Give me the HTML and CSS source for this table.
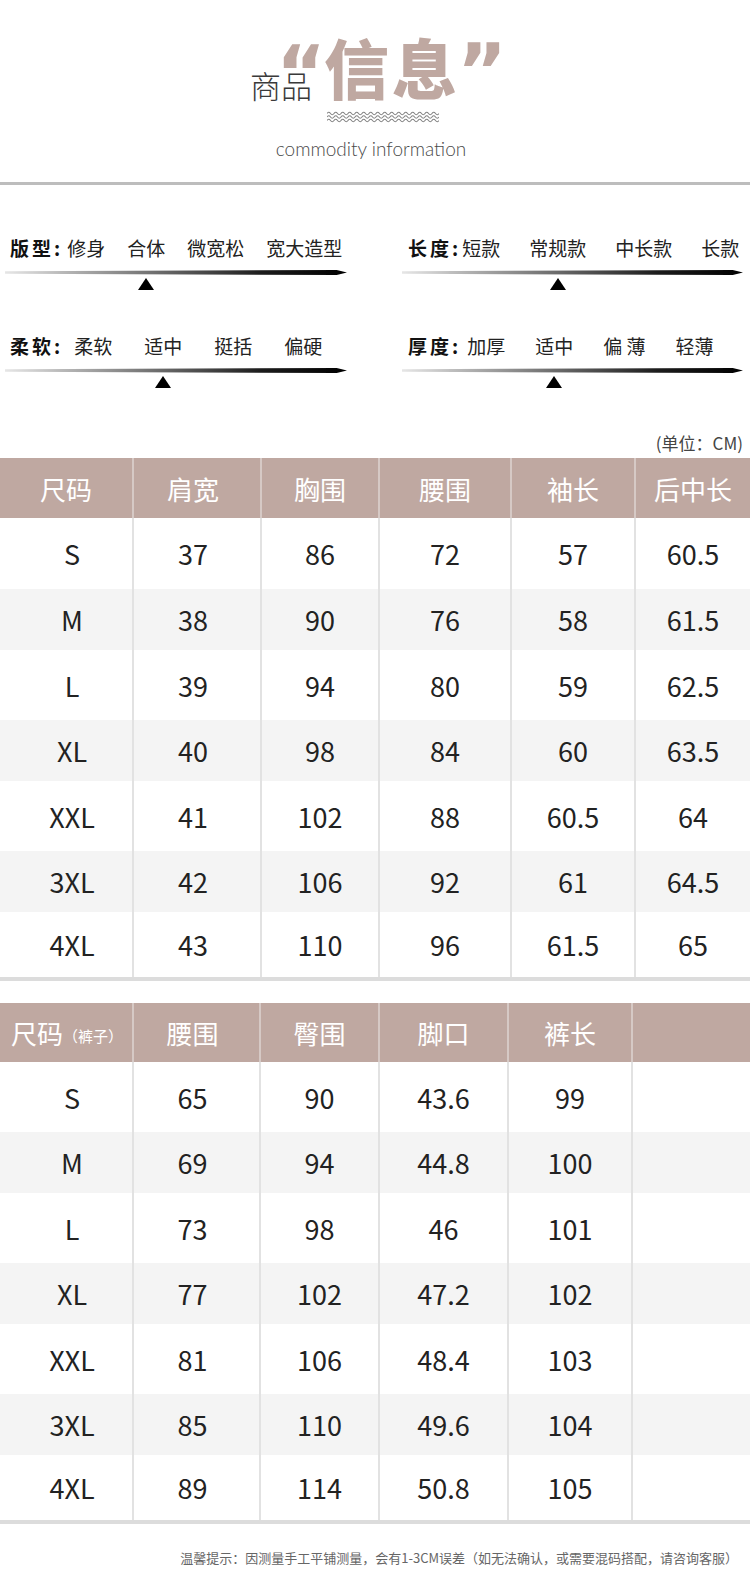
FILE: index.html
```html
<!DOCTYPE html>
<html lang="zh-CN">
<head>
<meta charset="utf-8">
<title>商品信息</title>
<link rel="stylesheet" href="styles.css">
</head>
<body>
<div class="page">
  <header class="brand">
    <div class="brand__title">
      <span class="brand__sub">商品</span>
      <span class="brand__quote brand__quote--open">“</span>
      <span class="brand__main"><span>信</span><span>息</span></span>
      <span class="brand__quote brand__quote--close">”</span>
    </div>
    <svg class="brand__wave" width="112" height="12" viewBox="0 0 112 12">
      <defs>
        <path id="wv" d="M0 0 q1.75 -2.4 3.5 0 t3.5 0 t3.5 0 t3.5 0 t3.5 0 t3.5 0 t3.5 0 t3.5 0 t3.5 0 t3.5 0 t3.5 0 t3.5 0 t3.5 0 t3.5 0 t3.5 0 t3.5 0 t3.5 0 t3.5 0 t3.5 0 t3.5 0 t3.5 0 t3.5 0 t3.5 0 t3.5 0 t3.5 0 t3.5 0 t3.5 0 t3.5 0 t3.5 0 t3.5 0 t3.5 0 t3.5 0"/>
      </defs>
      <g fill="none" stroke="#858585" stroke-width="1.1">
        <use href="#wv" y="2.5"/>
        <use href="#wv" y="6"/>
        <use href="#wv" y="9.5"/>
      </g>
    </svg>
    <div class="brand__en">commodity information</div>
  </header>
  <div class="rule"></div>

  <section class="params">
    <div class="param">
      <div class="opts opts--fit">
        <span class="opts__label">版型:</span>
        <span class="opt">修身</span>
        <span class="opt opt--sel">合体</span>
        <span class="opt">微宽松</span>
        <span class="opt">宽大造型</span>
      </div>
      <div class="bar"></div>
    </div>
    <div class="param param--right">
      <div class="opts opts--len">
        <span class="opts__label">长度:</span>
        <span class="opt">短款</span>
        <span class="opt opt--sel">常规款</span>
        <span class="opt">中长款</span>
        <span class="opt">长款</span>
      </div>
      <div class="bar"></div>
    </div>
    <div class="param">
      <div class="opts opts--soft">
        <span class="opts__label">柔软:</span>
        <span class="opt">柔软</span>
        <span class="opt opt--sel">适中</span>
        <span class="opt">挺括</span>
        <span class="opt">偏硬</span>
      </div>
      <div class="bar"></div>
    </div>
    <div class="param param--right">
      <div class="opts opts--thick">
        <span class="opts__label">厚度:</span>
        <span class="opt">加厚</span>
        <span class="opt opt--sel">适中</span>
        <span class="opt">偏 薄</span>
        <span class="opt">轻薄</span>
      </div>
      <div class="bar"></div>
    </div>
  </section>

  <div class="unit">(单位：CM)</div>

  <div class="st st--top">
    <div class="st__row st__row--head">
      <div class="st__cell">尺码</div>
      <div class="st__cell">肩宽</div>
      <div class="st__cell">胸围</div>
      <div class="st__cell">腰围</div>
      <div class="st__cell">袖长</div>
      <div class="st__cell">后中长</div>
    </div>
    <div class="st__body">
      <div class="st__row"><div class="st__cell st__cell--size">S</div><div class="st__cell">37</div><div class="st__cell">86</div><div class="st__cell">72</div><div class="st__cell">57</div><div class="st__cell">60.5</div></div>
      <div class="st__row"><div class="st__cell st__cell--size">M</div><div class="st__cell">38</div><div class="st__cell">90</div><div class="st__cell">76</div><div class="st__cell">58</div><div class="st__cell">61.5</div></div>
      <div class="st__row"><div class="st__cell st__cell--size">L</div><div class="st__cell">39</div><div class="st__cell">94</div><div class="st__cell">80</div><div class="st__cell">59</div><div class="st__cell">62.5</div></div>
      <div class="st__row"><div class="st__cell st__cell--size">XL</div><div class="st__cell">40</div><div class="st__cell">98</div><div class="st__cell">84</div><div class="st__cell">60</div><div class="st__cell">63.5</div></div>
      <div class="st__row"><div class="st__cell st__cell--size">XXL</div><div class="st__cell">41</div><div class="st__cell">102</div><div class="st__cell">88</div><div class="st__cell">60.5</div><div class="st__cell">64</div></div>
      <div class="st__row"><div class="st__cell st__cell--size">3XL</div><div class="st__cell">42</div><div class="st__cell">106</div><div class="st__cell">92</div><div class="st__cell">61</div><div class="st__cell">64.5</div></div>
      <div class="st__row"><div class="st__cell st__cell--size">4XL</div><div class="st__cell">43</div><div class="st__cell">110</div><div class="st__cell">96</div><div class="st__cell">61.5</div><div class="st__cell">65</div></div>
    </div>
  </div>

  <div class="st st--pants">
    <div class="st__row st__row--head">
      <div class="st__cell st__cell--first">尺码<span class="st__note">（裤子）</span></div>
      <div class="st__cell">腰围</div>
      <div class="st__cell">臀围</div>
      <div class="st__cell">脚口</div>
      <div class="st__cell">裤长</div>
      <div class="st__cell"></div>
    </div>
    <div class="st__body">
      <div class="st__row"><div class="st__cell st__cell--size">S</div><div class="st__cell">65</div><div class="st__cell">90</div><div class="st__cell">43.6</div><div class="st__cell">99</div><div class="st__cell"></div></div>
      <div class="st__row"><div class="st__cell st__cell--size">M</div><div class="st__cell">69</div><div class="st__cell">94</div><div class="st__cell">44.8</div><div class="st__cell">100</div><div class="st__cell"></div></div>
      <div class="st__row"><div class="st__cell st__cell--size">L</div><div class="st__cell">73</div><div class="st__cell">98</div><div class="st__cell">46</div><div class="st__cell">101</div><div class="st__cell"></div></div>
      <div class="st__row"><div class="st__cell st__cell--size">XL</div><div class="st__cell">77</div><div class="st__cell">102</div><div class="st__cell">47.2</div><div class="st__cell">102</div><div class="st__cell"></div></div>
      <div class="st__row"><div class="st__cell st__cell--size">XXL</div><div class="st__cell">81</div><div class="st__cell">106</div><div class="st__cell">48.4</div><div class="st__cell">103</div><div class="st__cell"></div></div>
      <div class="st__row"><div class="st__cell st__cell--size">3XL</div><div class="st__cell">85</div><div class="st__cell">110</div><div class="st__cell">49.6</div><div class="st__cell">104</div><div class="st__cell"></div></div>
      <div class="st__row"><div class="st__cell st__cell--size">4XL</div><div class="st__cell">89</div><div class="st__cell">114</div><div class="st__cell">50.8</div><div class="st__cell">105</div><div class="st__cell"></div></div>
    </div>
  </div>

  <p class="tip">温馨提示：因测量手工平铺测量，会有1-3CM误差（如无法确认，或需要混码搭配，请咨询客服）</p>
</div>
</body>
</html>
```

FILE: styles.css
```css
* {
  box-sizing: border-box;
  margin: 0;
  padding: 0;
}

body {
  width: 750px;
  background: #ffffff;
  font-family: "Noto Sans CJK SC", "Noto Sans", sans-serif;
  color: #222222;
}

/* ---------- brand header ---------- */
.brand {
  height: 182px;
  padding-top: 28px;
}

.brand__title {
  display: flex;
  align-items: flex-start;
  padding-left: 250px;
}

.brand__sub {
  font-size: 31px;
  line-height: 1;
  font-weight: 300;
  color: #3a3a3a;
  margin-top: 41px;
}

.brand__quote {
  font-family: "DejaVu Sans", "Liberation Sans", sans-serif;
  font-weight: 700;
  font-size: 76px;
  line-height: 0.7;
  color: #bfa8a1;
}

.brand__quote--open {
  margin-left: -36px;
  margin-top: 19px;
}

.brand__main {
  display: flex;
  gap: 3px;
  font-size: 65px;
  line-height: 1;
  font-weight: 900;
  color: #bfa8a1;
  margin-left: -2px;
  margin-top: 6px;
}

.brand__quote--close {
  margin-left: 0;
  margin-top: 17px;
}

.brand__wave {
  display: block;
  margin: 11px 0 0 327px;
}

.brand__en {
  margin-top: 15px;
  padding-right: 8px;
  text-align: center;
  font-family: "Lato", "Noto Sans", sans-serif;
  font-weight: 300;
  font-size: 19px;
  line-height: 22px;
  color: #4a4a4a;
}

.rule {
  height: 3px;
  background: #bdbdbd;
}

/* ---------- parameters ---------- */
.params {
  display: grid;
  grid-template-columns: 342px 341px;
  column-gap: 55px;
  row-gap: 61px;
  padding: 53px 0 0 5px;
}

.opts {
  display: flex;
  font-size: 19px;
  line-height: 19px;
  white-space: nowrap;
  padding-left: 5px;
  color: #222222;
}

.param--right .opts {
  padding-left: 6px;
}

.opts__label {
  font-weight: 700;
  color: #111111;
  letter-spacing: 3px;
  margin-right: 4px;
}

.opt {
  position: relative;
}

.opt--sel::after {
  content: "";
  position: absolute;
  left: 50%;
  top: calc(100% + 21px);
  transform: translateX(-50%);
  border-left: 8px solid transparent;
  border-right: 8px solid transparent;
  border-bottom: 12px solid #000000;
}

.opts--fit { gap: 22px; }
.opts--fit .opts__label { margin-right: -18px; }

.opts--len { gap: 29px; }
.opts--len .opts__label { margin-right: -28px; }

.opts--soft { gap: 32px; }
.opts--soft .opts__label { margin-right: -21px; }

.opts--thick { gap: 30px; }
.opts--thick .opts__label { margin-right: -24px; }

.bar {
  margin-top: 13px;
  height: 5px;
  background: linear-gradient(90deg, #e6e6e6 0%, #aaaaaa 22%, #5e5e5e 50%, #1c1c1c 75%, #000000 100%);
  clip-path: polygon(0 25%, 97% 0, 100% 50%, 97% 100%, 0 75%);
}

/* ---------- unit label ---------- */
.unit {
  margin-top: 60px;
  padding-right: 7px;
  text-align: right;
  font-size: 17px;
  line-height: 20px;
  color: #444444;
}

/* ---------- size tables ---------- */
.st {
  margin-top: 5px;
  border-bottom: 4px solid #dcdcdc;
}

.st--pants {
  margin-top: 22px;
}

.st__row {
  display: grid;
  grid-template-columns: 132px 128px 118px 132px 124px 116px;
  height: 70px;
}

.st--pants .st__row {
  grid-template-columns: 132px 127px 119px 129px 124px 119px;
}

.st__row--head {
  height: 60px;
  background: #bfa8a1;
  color: #ffffff;
  font-size: 26px;
}

.st--pants .st__row--head {
  height: 59px;
}

.st__body .st__row:nth-child(even) {
  height: 61px;
  background: #f4f4f4;
}

.st__body .st__row:first-child {
  height: 71px;
}

.st--pants .st__body .st__row:first-child {
  height: 70px;
}

.st__body .st__row:last-child {
  height: 65px;
}

.st__body {
  font-size: 27px;
  color: #222222;
}

.st__cell {
  display: flex;
  align-items: center;
  justify-content: center;
  white-space: nowrap;
}

.st__cell + .st__cell {
  border-left: 2px solid #e2e2e2;
}

.st__cell:nth-child(2) {
  padding-right: 8px;
}

.st__row--head .st__cell + .st__cell {
  border-left-color: #d6c9c5;
}

.st__cell--size {
  padding-left: 12px;
}

.st__cell--first {
  justify-content: flex-start;
  align-items: center;
  padding-left: 11px;
}

.st__note {
  font-size: 15px;
  align-self: center;
  margin-top: 6px;
}

/* ---------- footer tip ---------- */
.tip {
  margin-top: 26px;
  padding-right: 12px;
  text-align: right;
  font-size: 13px;
  line-height: 16px;
  color: #666666;
}
```
